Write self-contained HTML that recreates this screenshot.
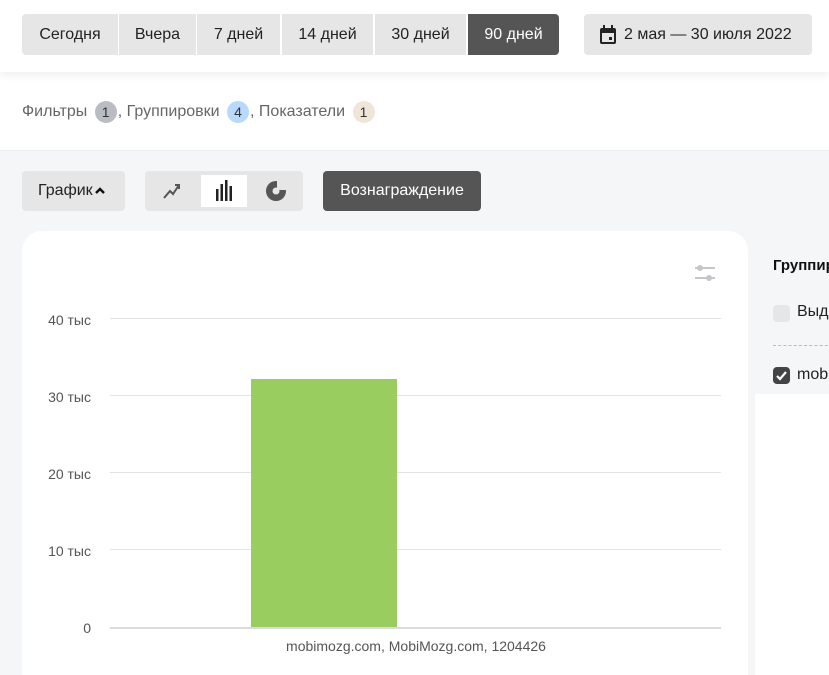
<!DOCTYPE html>
<html><head><meta charset="utf-8"><style>
*{box-sizing:border-box;margin:0;padding:0}
html,body{width:829px;height:675px;overflow:hidden}
body{background:#f5f6f8;font-family:"Liberation Sans",Arial,sans-serif;position:relative;color:#222}
.top{position:absolute;left:0;top:0;width:829px;height:150px;background:#fff}
.bar{position:absolute;left:0;top:0;width:829px;height:72px;background:#fff;box-shadow:0 4px 8px rgba(0,0,0,.06)}
.b{position:absolute;top:14px;height:41px;background:#e6e6e6;font-size:16px;line-height:41px;text-align:center;color:#222}
.dk{background:#555;color:#fff}
.abs{position:absolute}
.badge{display:inline-block;width:22px;height:22px;border-radius:11px;text-align:center;line-height:22px;font-size:14px;color:#333;vertical-align:middle;margin:0 1px 0 3px}
.grid{position:absolute;left:110px;width:611px;height:1px;background:#e3e3e6}
.yl{position:absolute;right:738px;font-size:14px;color:#555;text-align:right;width:80px}
</style></head><body>
<div class="top"></div>
<div class="bar"></div>
<div class="b" style="left:22px;width:96px;border-radius:4px 0 0 4px">Сегодня</div>
<div class="b" style="left:119px;width:77px">Вчера</div>
<div class="b" style="left:197px;width:83px">7 дней</div>
<div class="b" style="left:282px;width:91px">14 дней</div>
<div class="b" style="left:375px;width:91px">30 дней</div>
<div class="b dk" style="left:468px;width:91px;border-radius:0 4px 4px 0">90 дней</div>
<div class="b" style="left:584px;width:228px;border-radius:4px">
<svg width="18" height="20" viewBox="0 0 18 20" style="position:absolute;left:15px;top:11px"><rect x="1" y="3" width="16" height="16" rx="2" fill="#222"/><rect x="4" y="0" width="2" height="5" fill="#222"/><rect x="12" y="0" width="2" height="5" fill="#222"/><rect x="3" y="8" width="12" height="9" fill="#e6e6e6"/><rect x="10" y="12" width="3" height="3" fill="#222"/></svg>
<span style="position:absolute;left:40px">2 мая — 30 июля 2022</span></div>
<div class="abs" style="left:22px;top:100px;font-size:16px;color:#666;line-height:24px;white-space:nowrap">Фильтры <span class="badge" style="background:#b9bcc2">1</span>, Группировки <span class="badge" style="background:#b8d9fb">4</span>, Показатели <span class="badge" style="background:#f0e6d8">1</span></div>
<div class="abs" style="left:0;top:150px;width:829px;height:1px;background:#eceef1"></div>
<div class="abs" style="left:22px;top:171px;width:103px;height:40px;background:#e6e6e6;border-radius:4px;font-size:16px;line-height:40px;padding-left:16px;white-space:nowrap">График<svg width="14" height="10" viewBox="0 0 14 10" style="vertical-align:-1px"><path d="M3 7L7 3L11 7" stroke="#111" stroke-width="2.5" fill="none"/></svg></div>
<div class="abs" style="left:145px;top:171px;width:158px;height:40px;background:#e6e6e6;border-radius:4px"></div>
<div class="abs" style="left:201px;top:175px;width:46px;height:32px;background:#fff"></div>
<svg class="abs" style="left:162px;top:181px" width="20" height="20" viewBox="0 0 20 20"><path d="M2 17L8 10L11 13L17 4M13 4H17V8" stroke="#555" stroke-width="2" fill="none"/></svg>
<svg class="abs" style="left:214px;top:180px" width="20" height="22" viewBox="0 0 20 22"><g fill="#222"><rect x="2" y="9" width="2.5" height="12"/><rect x="6.5" y="4" width="2.5" height="17"/><rect x="11" y="0" width="2.5" height="21"/><rect x="15.5" y="6" width="2.5" height="15"/></g></svg>
<svg class="abs" style="left:265px;top:180px" width="22" height="22" viewBox="0 0 22 22"><circle cx="11" cy="11" r="10" fill="#555"/><circle cx="11" cy="11" r="3.5" fill="#e6e6e6"/><path d="M12 10L12 0.5A10 10 0 0 1 21.5 10Z" fill="#e6e6e6"/></svg>
<div class="abs" style="left:323px;top:171px;width:158px;height:40px;background:#555;border-radius:4px;color:#fff;font-size:16px;line-height:40px;text-align:center">Вознаграждение</div>
<div class="abs" style="left:22px;top:231px;width:726px;height:444px;background:#fff;border-radius:20px 20px 0 0"></div>
<svg class="abs" style="left:694px;top:264px" width="22" height="18" viewBox="0 0 22 18"><g stroke="#c4c6cc" stroke-width="2"><line x1="1" y1="4" x2="21" y2="4"/><line x1="1" y1="14" x2="21" y2="14"/></g><circle cx="6" cy="4" r="3" fill="#c4c6cc"/><circle cx="15" cy="14" r="3" fill="#c4c6cc"/></svg>
<div class="grid" style="top:318px"></div><div class="grid" style="top:395px"></div><div class="grid" style="top:472px"></div><div class="grid" style="top:549px"></div><div class="grid" style="top:627px;height:2px;background:#dcdce0"></div>
<div class="yl" style="top:312px">40 тыс</div><div class="yl" style="top:389px">30 тыс</div><div class="yl" style="top:466px">20 тыс</div><div class="yl" style="top:543px">10 тыс</div><div class="yl" style="top:620px">0</div>
<div class="abs" style="left:251px;top:379px;width:146px;height:248px;background:#99cd5f"></div>
<div class="abs" style="left:216px;top:638px;width:400px;text-align:center;font-size:14px;color:#555">mobimozg.com, MobiMozg.com, 1204426</div>
<div class="abs" style="left:755px;top:240px;width:74px;height:435px;overflow:hidden">
<div class="abs" style="left:18px;top:17px;font-size:15px;font-weight:bold;color:#111;white-space:nowrap">Группировки</div>
<div class="abs" style="left:18px;top:65px;width:17px;height:17px;border-radius:4px;background:#e6e6e6"></div>
<div class="abs" style="left:42px;top:63px;font-size:16px;color:#222;white-space:nowrap">Выделить</div>
<div class="abs" style="left:18px;top:105px;width:60px;border-top:1px dashed #bbb"></div>
<div class="abs" style="left:18px;top:127px;width:17px;height:17px;border-radius:4px;background:#444"><svg width="17" height="17" viewBox="0 0 17 17"><path d="M4 9L7 12L13 5" stroke="#fff" stroke-width="2.2" fill="none"/></svg></div>
<div class="abs" style="left:42px;top:126px;font-size:16px;color:#222;white-space:nowrap">mobimozg</div>
<div class="abs" style="left:0;top:154px;width:74px;height:281px;background:#fff"></div>
</div>
</body></html>
